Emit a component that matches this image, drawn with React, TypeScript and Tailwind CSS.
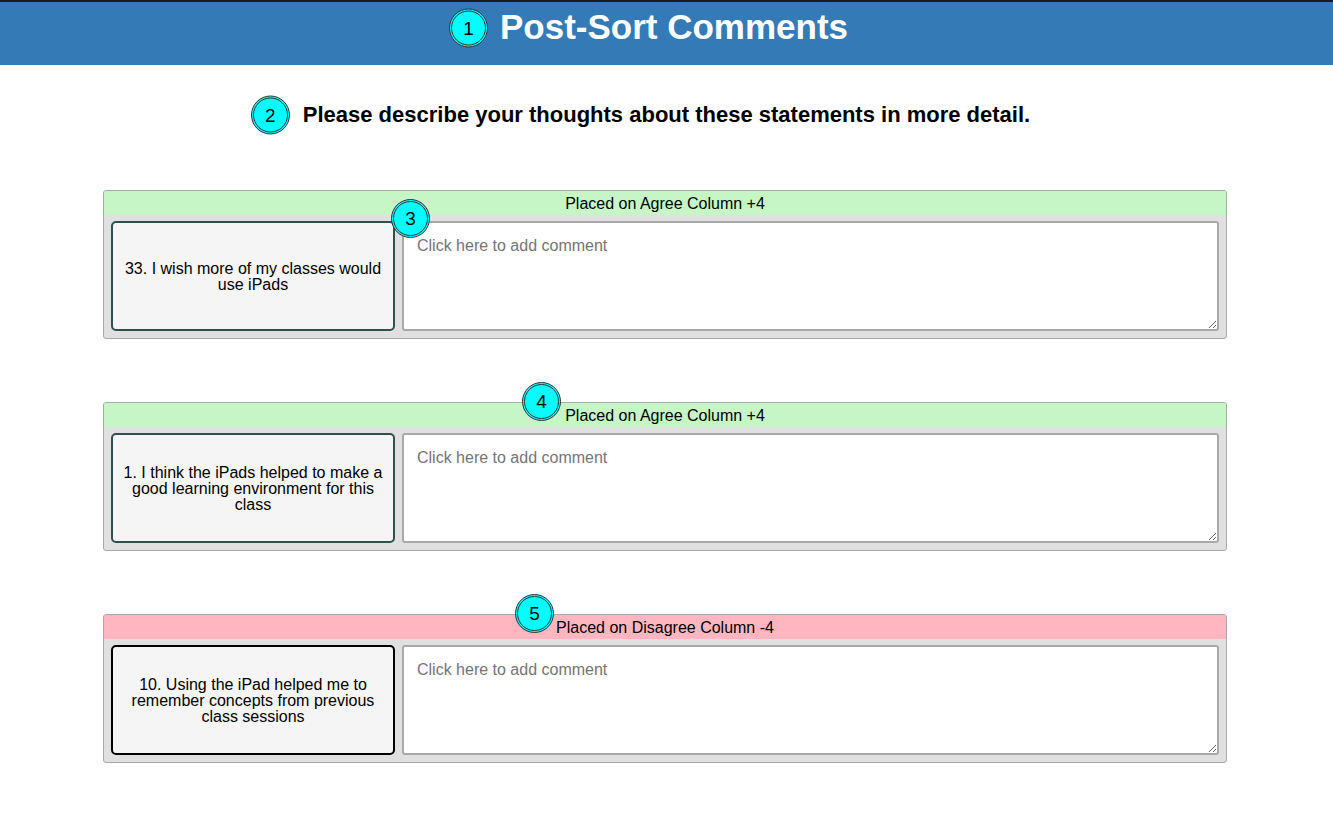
import React from "react";

function Badge({ n, className = "" }: { n: number; className?: string }) {
  return (
    <div
      className={
        "w-[39px] h-[39px] rounded-full bg-[#00ffff] border-[3px] border-double border-[#333] flex items-center justify-center text-[19px] leading-none text-black font-['Liberation_Sans',Arial,sans-serif] " +
        className
      }
    >
      {n}
    </div>
  );
}

type Item = {
  header: string;
  headerBg: string;
  statement: string;
  cardBorder: string;
  badge: number;
  badgePos: string;
};

const items: Item[] = [
  {
    header: "Placed on Agree Column +4",
    headerBg: "bg-[#c6f6c6]",
    statement: "33. I wish more of my classes would use iPads",
    cardBorder: "border-[#2f4f4f]",
    badge: 3,
    badgePos: "left-[287px] top-[8px]",
  },
  {
    header: "Placed on Agree Column +4",
    headerBg: "bg-[#c6f6c6]",
    statement: "1. I think the iPads helped to make a good learning environment for this class",
    cardBorder: "border-[#2f4f4f]",
    badge: 4,
    badgePos: "left-[418px] top-[-21px]",
  },
  {
    header: "Placed on Disagree Column -4",
    headerBg: "bg-[#ffb6c1]",
    statement: "10. Using the iPad helped me to remember concepts from previous class sessions",
    cardBorder: "border-black",
    badge: 5,
    badgePos: "left-[411px] top-[-21px]",
  },
];

export default function App() {
  return (
    <div className="min-h-[816px] bg-white font-['Liberation_Sans',Arial,sans-serif] text-black">
      <header className="h-[65px] bg-[#337ab7] border-t-2 border-[#1a1a1a] flex items-center justify-center pb-[12px]">
        <div className="relative ml-[15px]">
          <Badge n={1} className="absolute right-full mr-[12px] top-1/2 -translate-y-1/2" />
          <h1 className="text-white font-bold text-[35px] leading-none mb-[3px]">Post-Sort Comments</h1>
        </div>
      </header>

      <div className="h-[98px] flex items-center justify-center pt-[2px]">
        <div className="relative">
          <Badge n={2} className="absolute right-full mr-[13px] top-1/2 -translate-y-1/2" />
          <h2 className="font-bold text-[22px] leading-none">
            Please describe your thoughts about these statements in more detail.
          </h2>
        </div>
      </div>

      <div className="ml-[103px] w-[1124px] mt-[27px] flex flex-col gap-[63px] pb-[54px]">
        {items.map((it, i) => (
          <div key={i} className="relative h-[149px] border border-[#a9a9a9] rounded-[3px] bg-[#e0e0e0] flex flex-col">
            <div className={"h-[24px] leading-[25px] text-center text-[16px] rounded-t-[2px] " + it.headerBg}>
              {it.header}
            </div>
            <div className="flex-1 flex gap-[7px] pt-[6px] pb-[7px] px-[7px]">
              <div
                className={
                  "w-[284px] shrink-0 bg-[#f5f5f5] border-2 rounded-[5px] flex items-center justify-center text-center text-[16px] leading-[16px] px-[8px] pt-[1px] " +
                  it.cardBorder
                }
              >
                {it.statement}
              </div>
              <textarea
                className="flex-1 bg-white border-2 border-[#a9a9a9] rounded-[3px] px-[13px] pt-[14px] pb-[10px] text-[16px] leading-[18px] placeholder:text-[#757575] outline-none resize-y"
                placeholder="Click here to add comment"
              />
            </div>
            <Badge n={it.badge} className={"absolute " + it.badgePos} />
          </div>
        ))}
      </div>
    </div>
  );
}
